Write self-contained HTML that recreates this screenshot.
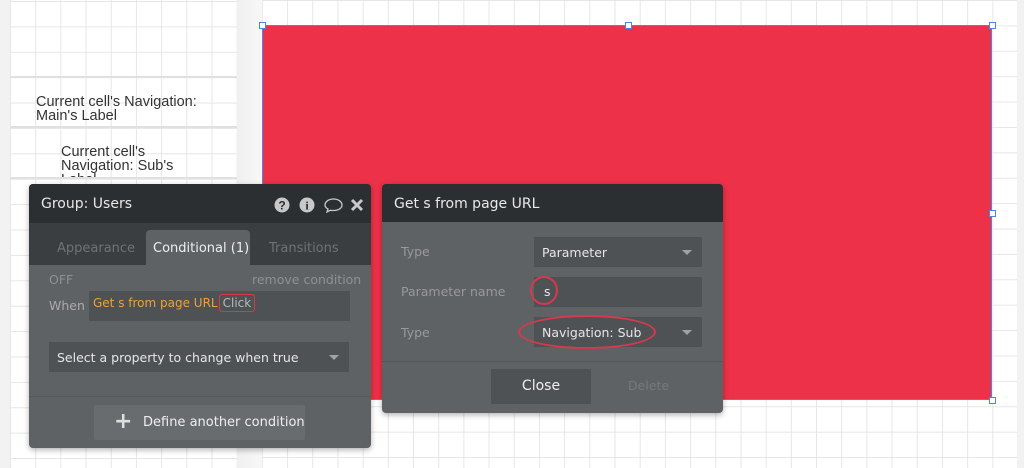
<!DOCTYPE html>
<html><head><meta charset="utf-8"><style>
*{margin:0;padding:0;box-sizing:border-box}
body{width:1024px;height:468px;overflow:hidden;position:relative;background:#f2f2f2;font-family:"DejaVu Sans","Liberation Sans",sans-serif}
.grid{position:absolute;background-color:#fff;
background-image:linear-gradient(to right,#e6e6e6 1px,transparent 1px),linear-gradient(to bottom,#e6e6e6 1px,transparent 1px);
background-size:25.2px 25.4px}
.abs{position:absolute}
.sep{position:absolute;left:10px;width:227px;height:2px;background:#e0e0e0}
.lbl{position:absolute;font-family:"Liberation Sans",sans-serif;font-size:14.5px;color:#333;line-height:14px}
.red{position:absolute;left:262px;top:25px;width:730px;height:375px;background:#ec3148;border:1px solid #4a86e8}
.h{position:absolute;width:7px;height:7px;background:#fff;border:1px solid #4a86e8}
.panel{position:absolute;background:#5f6265;border-radius:4px;box-shadow:0 2px 6px rgba(0,0,0,.3);overflow:hidden}
.hd{position:absolute;left:0;right:0;top:0;background:#2b2f31;color:#e8e8e8;font-size:14px}
.in{position:absolute;background:#4f5255;color:#e6e6e6;font-size:12.5px}
.g{color:#a9abad;font-size:12.5px;position:absolute}
.arrow{position:absolute;width:0;height:0;border-left:5px solid transparent;border-right:5px solid transparent;border-top:5px solid #a0a2a4}
</style></head><body>
<div class="grid" style="left:10px;top:0;width:227px;height:468px;background-position:0 1px"></div>
<div class="grid" style="left:262px;top:0;width:755px;height:420px;background-position:-252px 0"></div>
<div class="abs" style="left:237px;top:0;width:25px;height:468px;background:linear-gradient(to right,#f0f0f0,#f7f7f7)"></div>
<div class="grid" style="left:262px;top:400px;width:755px;height:68px;background-position:-252px -400px"></div>
<div class="sep" style="top:76px"></div><div class="sep" style="top:126px"></div>
<div class="lbl" style="left:36px;top:95px">Current cell's Navigation:<br>Main's Label</div>
<div class="abs" style="left:10px;top:128px;width:227px;height:49px;overflow:hidden">
<div class="lbl" style="left:51px;top:17px">Current cell's<br>Navigation: Sub's<br>Label</div></div>
<div class="sep" style="top:177px"></div>

<div class="red"></div>
<div class="h" style="left:259px;top:22px"></div><div class="h" style="left:625px;top:22px"></div><div class="h" style="left:989px;top:22px"></div>
<div class="h" style="left:989px;top:210px"></div><div class="h" style="left:989px;top:397px"></div>

<div class="panel" style="left:29px;top:184px;width:342px;height:264px">
 <div class="hd" style="height:39px"><span class="abs" style="left:12px;top:12px">Group: Users</span>
  <svg class="abs" style="left:245px;top:13px" width="90" height="16" viewBox="0 0 90 16">
   <circle cx="8" cy="8" r="7.5" fill="#c8c8c8"/><text x="8" y="12.5" font-size="12" font-weight="bold" text-anchor="middle" fill="#2b2f31" font-family="Liberation Sans">?</text>
   <circle cx="33" cy="8" r="7.5" fill="#c8c8c8"/><text x="33" y="12.5" font-size="12" font-weight="bold" text-anchor="middle" fill="#2b2f31" font-family="Liberation Serif">i</text>
   <path d="M51 8c0-3.5 4-6 8.5-6S68 4.5 68 8s-4 5.5-8.5 5.5c-1 0-2 0-3-.3L53 15l1-3C52 11 51 9.5 51 8z" fill="none" stroke="#c8c8c8" stroke-width="1.3"/>
   <path d="M78 3l10 10M88 3L78 13" stroke="#c8c8c8" stroke-width="3"/>
  </svg></div>
 <div class="abs" style="left:0;top:39px;width:342px;height:42px;background:#3b3e41"></div>
 <div class="abs" style="left:117px;top:46px;width:104px;height:36px;background:#5f6265;border-radius:4px 4px 0 0"></div>
 <span class="abs" style="left:28px;top:57px;color:#6f7274;font-size:13px">Appearance</span>
 <span class="abs" style="left:124px;top:57px;color:#eee;font-size:13px">Conditional (1)</span>
 <span class="abs" style="left:240px;top:57px;color:#6f7274;font-size:13px">Transitions</span>
 <span class="g" style="left:20px;top:88px;color:#8e9092">OFF</span>
 <span class="g" style="left:223px;top:88px;color:#8e9092">remove condition</span>
 <span class="g" style="left:20px;top:114px">When</span>
 <div class="in" style="left:60px;top:107px;width:261px;height:30px"><div class="abs" style="left:4px;top:5px;white-space:nowrap;font-size:12px"><span style="color:#e9a33a">Get s from page URL</span><span style="margin-left:1px;padding:1px 3px;border:1px solid #d6394c;border-radius:3px;color:#b8b8b8">Click</span></div></div>
 <div class="in" style="left:20px;top:158px;width:300px;height:30px"><span class="abs" style="left:8px;top:8px">Select a property to change when true</span><div class="arrow" style="left:280px;top:13px"></div></div>
 <div class="abs" style="left:0;top:212px;width:342px;height:1px;background:#56595c"></div>
 <div class="abs" style="left:65px;top:221px;width:211px;height:35px;background:#696c6f;border-radius:2px;color:#eee;font-size:13px"><span class="abs" style="left:20px;top:4px;font-size:22px;font-weight:bold;color:#ddd">+</span><span class="abs" style="left:49px;top:10px">Define another condition</span></div>
</div>

<div class="panel" style="left:382px;top:184px;width:341px;height:229px">
 <div class="hd" style="height:38px"><span class="abs" style="left:12px;top:12px">Get s from page URL</span></div>
 <span class="g" style="left:19px;top:60px;color:#97999b">Type</span>
 <div class="in" style="left:152px;top:53px;width:168px;height:30px"><span class="abs" style="left:8px;top:8px">Parameter</span><div class="arrow" style="left:148px;top:13px"></div></div>
 <span class="g" style="left:19px;top:100px;color:#97999b">Parameter name</span>
 <div class="in" style="left:152px;top:93px;width:168px;height:30px"><span class="abs" style="left:10px;top:7px">s</span></div>
 <div class="abs" style="left:148px;top:92px;width:28px;height:29px;border:2px solid #d6394c;border-radius:50%"></div>
 <span class="g" style="left:19px;top:141px;color:#97999b">Type</span>
 <div class="in" style="left:152px;top:133px;width:168px;height:30px"><span class="abs" style="left:8px;top:8px">Navigation: Sub</span><div class="arrow" style="left:148px;top:13px"></div></div>
 <div class="abs" style="left:136px;top:131px;width:138px;height:34px;border:2px solid #d6394c;border-radius:50%"></div>
 <div class="abs" style="left:0;top:177px;width:341px;height:1px;background:#56595c"></div>
 <div class="abs" style="left:109px;top:185px;width:100px;height:35px;background:#4f5255;color:#eee;font-size:14px;text-align:center;line-height:35px">Close</div>
 <span class="abs" style="left:246px;top:194px;color:#76797b;font-size:12.5px">Delete</span>
</div>
</body></html>
